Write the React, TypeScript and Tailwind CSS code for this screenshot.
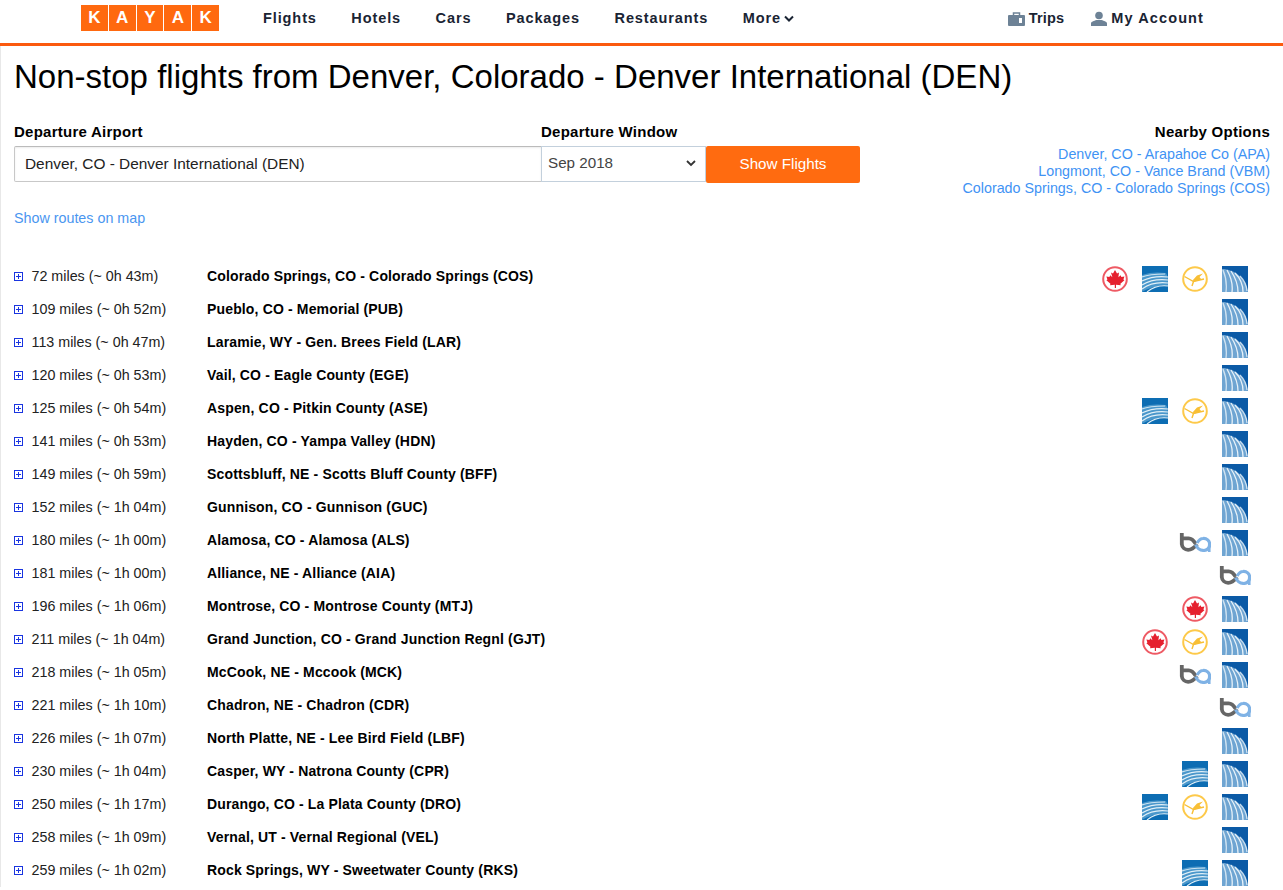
import React from "react";

type Logo = "ac" | "ca" | "lh" | "ua" | "bo";
type Route = { d: string; name: string; logos: Logo[] };

const routes: Route[] = [
  { d: "72 miles (~ 0h 43m)", name: "Colorado Springs, CO - Colorado Springs (COS)", logos: ["ac", "ca", "lh", "ua"] },
  { d: "109 miles (~ 0h 52m)", name: "Pueblo, CO - Memorial (PUB)", logos: ["ua"] },
  { d: "113 miles (~ 0h 47m)", name: "Laramie, WY - Gen. Brees Field (LAR)", logos: ["ua"] },
  { d: "120 miles (~ 0h 53m)", name: "Vail, CO - Eagle County (EGE)", logos: ["ua"] },
  { d: "125 miles (~ 0h 54m)", name: "Aspen, CO - Pitkin County (ASE)", logos: ["ca", "lh", "ua"] },
  { d: "141 miles (~ 0h 53m)", name: "Hayden, CO - Yampa Valley (HDN)", logos: ["ua"] },
  { d: "149 miles (~ 0h 59m)", name: "Scottsbluff, NE - Scotts Bluff County (BFF)", logos: ["ua"] },
  { d: "152 miles (~ 1h 04m)", name: "Gunnison, CO - Gunnison (GUC)", logos: ["ua"] },
  { d: "180 miles (~ 1h 00m)", name: "Alamosa, CO - Alamosa (ALS)", logos: ["bo", "ua"] },
  { d: "181 miles (~ 1h 00m)", name: "Alliance, NE - Alliance (AIA)", logos: ["bo"] },
  { d: "196 miles (~ 1h 06m)", name: "Montrose, CO - Montrose County (MTJ)", logos: ["ac", "ua"] },
  { d: "211 miles (~ 1h 04m)", name: "Grand Junction, CO - Grand Junction Regnl (GJT)", logos: ["ac", "lh", "ua"] },
  { d: "218 miles (~ 1h 05m)", name: "McCook, NE - Mccook (MCK)", logos: ["bo", "ua"] },
  { d: "221 miles (~ 1h 10m)", name: "Chadron, NE - Chadron (CDR)", logos: ["bo"] },
  { d: "226 miles (~ 1h 07m)", name: "North Platte, NE - Lee Bird Field (LBF)", logos: ["ua"] },
  { d: "230 miles (~ 1h 04m)", name: "Casper, WY - Natrona County (CPR)", logos: ["ca", "ua"] },
  { d: "250 miles (~ 1h 17m)", name: "Durango, CO - La Plata County (DRO)", logos: ["ca", "lh", "ua"] },
  { d: "258 miles (~ 1h 09m)", name: "Vernal, UT - Vernal Regional (VEL)", logos: ["ua"] },
  { d: "259 miles (~ 1h 02m)", name: "Rock Springs, WY - Sweetwater County (RKS)", logos: ["ca", "ua"] },
];

function LogoIcon({ kind }: { kind: Logo }) {
  if (kind === "ac")
    return (
      <svg width="26" height="26" viewBox="0 0 26 26">
        <circle cx="13" cy="13" r="11.800" fill="none" stroke="#ee5a64" strokeWidth="2" />
        <path
          d="M13 4l2 3.600 2-1-.6 4.600 2.200-2 .8 1.800 3-.6-1 3.200 1 .6-4 3.600.3 1.400-4.700-.5V22h-1.200v-3.300l-4.700.5.300-1.400-4-3.600 1-.6-1-3.200 3 .6.800-1.800 2.200 2L9 6.600l2 1z"
          fill="#e5202e"
        />
      </svg>
    );
  if (kind === "lh")
    return (
      <svg width="26" height="26" viewBox="0 0 26 26">
        <circle cx="13" cy="13" r="11.800" fill="#fff" stroke="#fdc94a" strokeWidth="2" />
        <path d="M2.500 10.500L11.500 15.500L22 13" fill="none" stroke="#f8bf35" strokeWidth="1.400" />
        <path d="M11.500 15.500L10 20" fill="none" stroke="#f8bf35" strokeWidth="1.400" />
        <path d="M10.500 14.500L15 9.500L21 7.500L17.500 11L19.500 13.500L13 15.500z" fill="#f8bf35" />
      </svg>
    );
  if (kind === "ua")
    return (
      <svg width="26" height="26" viewBox="0 0 26 26">
        <rect width="26" height="26" fill="#0b5aa6" />
        <path d="M0 3C12 3 24 12 26 26H0z" fill="#6fa5d2" />
        <g fill="none" stroke="#e8f2f9" strokeWidth="1.300">
          <path d="M1 4C4 11 5 18 4 26" opacity=".8" />
          <path d="M5 4C9 11 11 18 10 26" />
          <path d="M9 5C13 11 16 18 16 26" />
          <path d="M13 7C18 12 21 18 21 26" />
          <path d="M18 10C22 14 24.500 19 25 25" opacity=".8" />
        </g>
      </svg>
    );
  if (kind === "ca")
    return (
      <svg width="26" height="26" viewBox="0 0 26 26">
        <rect width="26" height="26" fill="#0d6db3" />
        <path d="M0 9C8 6 16 6 24 7C26 10 26 14 26 20C18 19 6 22 0 26z" fill="#4a97cb" />
        <g fill="none" stroke="#e2f0f7" strokeWidth="1.200">
          <path d="M0 11C7 8 15 8 23 8" opacity=".85" />
          <path d="M0 15C8 11 16 10 26 11" />
          <path d="M0 19C8 14 17 13 26 14" />
          <path d="M0 23C8 17 17 16 26 17" />
          <path d="M5 26C11 21 18 19 26 20" />
        </g>
      </svg>
    );
  return (
    <svg width="32" height="19" viewBox="0 0 30 18" className="shrink-0">
      <path d="M2.500 0V10.500A6 6 0 0 0 8.500 16C13 16 15 13 17 10.500" fill="none" stroke="#666" strokeWidth="3.600" />
      <path d="M2.500 5H9C12 5 14 7.500 15.500 10" fill="none" stroke="#666" strokeWidth="3.600" />
      <path d="M15.500 11C17 14 19.500 16.500 22.500 16.500A5.700 5.700 0 1 0 22.500 5.200C20 5.200 18.500 7 17 9.500" fill="none" stroke="#7fb2e5" strokeWidth="3" />
      <path d="M28.500 10V18" fill="none" stroke="#7fb2e5" strokeWidth="2.500" />
    </svg>
  );
}

function Row({ r }: { r: Route }) {
  return (
    <div className="grid h-[33px] grid-cols-[17.500px_175.500px_1fr_auto] items-center pl-[13px] pr-[35px]">
      <span className="relative flex h-[9px] w-[9px] items-center justify-center border border-[#1a35e0]">
        <span className="absolute h-[1px] w-[5px] bg-[#1a35e0]" />
        <span className="absolute h-[5px] w-[1px] bg-[#1a35e0]" />
      </span>
      <span className="text-[14.300px] leading-[17px] text-[#222]">{r.d}</span>
      <span className="text-[14px] font-bold leading-[17px] tracking-[0.15px] text-black">{r.name}</span>
      <div className="flex items-center justify-end gap-[14px] pt-[4px]">
        {r.logos.map((l, i) => (
          <div key={i} className="flex h-[26px] w-[26px] items-center justify-center">
            <LogoIcon kind={l} />
          </div>
        ))}
      </div>
    </div>
  );
}

const navItem = "text-[14.500px] font-bold tracking-[0.9px] text-[#1a2433]";
const label = "text-[15px] font-bold leading-[18px] tracking-[0.25px] text-black";
const link = "text-[14.300px] leading-[17px] text-[#3f93f4]";

export default function App() {
  return (
    <div className="h-[890px] overflow-hidden bg-white font-['Liberation_Sans',Arial,sans-serif]">
      <header className="flex h-[46px] items-start border-b-[3px] border-[#fb5a0f] pl-[81px] pr-[79px]">
        <div className="mt-[5px] flex h-[26px] w-[138px] gap-[1px]">
          {["K", "A", "Y", "A", "K"].map((c, i) => (
            <span key={i} className="flex h-[26px] flex-1 items-center justify-center bg-[#ff690f] text-[17px] font-bold text-white">
              {c}
            </span>
          ))}
        </div>
        <nav className="ml-[44px] flex h-[38px] items-center gap-[34.500px]">
          <span className={navItem}>Flights</span>
          <span className={navItem}>Hotels</span>
          <span className={navItem}>Cars</span>
          <span className={navItem}>Packages</span>
          <span className={navItem}>Restaurants</span>
          <span className={`${navItem} flex items-center gap-[3px]`}>
            More
            <svg width="10" height="8" viewBox="0 0 10 8">
              <path d="M1 1.500l4 4 4-4" fill="none" stroke="#1a2433" strokeWidth="2" />
            </svg>
          </span>
        </nav>
        <div className="ml-auto flex h-[36px] items-center gap-[27px]">
          <span className="mt-[2px] flex items-center gap-[4px] text-[14.500px] font-bold tracking-[0.2px] text-[#1a2433]">
            <svg width="17" height="14" viewBox="0 0 17 14">
              <path d="M5.500 3V1h6v2" fill="none" stroke="#6d8296" strokeWidth="1.500" />
              <rect x="0" y="3" width="17" height="11" rx="1" fill="#6d8296" />
              <rect x="11" y="6" width="3" height="5" fill="#fff" />
            </svg>
            Trips
          </span>
          <span className="mt-[1px] flex items-center gap-[4px] text-[14.500px] font-bold tracking-[1.100px] text-[#1a2433]">
            <svg width="16" height="15" viewBox="0 0 16 15">
              <circle cx="8" cy="4.500" r="3.800" fill="#6d8296" />
              <path d="M0 15v-2.500c0-2 3-2.500 5.500-3.500h5c2.500 1 5.500 1.500 5.500 3.500V15z" fill="#6d8296" />
            </svg>
            My Account
          </span>
        </div>
      </header>

      <main className="border-l-[1px] border-[#e8e8e8]">
        <h1 className="pl-[13px] pt-[12px] text-[33.030px] font-normal leading-[38px] text-black">
          Non-stop flights from Denver, Colorado - Denver International (DEN)
        </h1>

        <div className="mt-[27px] flex pl-[13px] pr-[13px]">
          <div className="flex flex-col">
            <div className="flex">
              <label className={`w-[527px] ${label}`}>Departure Airport</label>
              <label className={label}>Departure Window</label>
            </div>
            <div className="mt-[5px] flex items-start">
              <div className="flex h-[36px] w-[528px] items-center rounded-l-[2px] border border-[#c8c8c8] border-t-[#bbb] pl-[10px] text-[15.400px] text-[#222] shadow-[inset_0_1px_2px_rgba(0,0,0,0.08)]">
                Denver, CO - Denver International (DEN)
              </div>
              <div className="ml-[-1px] flex h-[36px] w-[165px] items-center justify-between border border-[#c3d0dc] pb-[1px] pl-[6px] pr-[9px] text-[15.200px] text-[#444]">
                Sep 2018
                <svg width="10" height="7" viewBox="0 0 10 7">
                  <path d="M1 1l4 4 4-4" fill="none" stroke="#333" strokeWidth="1.800" />
                </svg>
              </div>
              <button className="h-[37px] w-[154px] rounded-[2px] bg-[#ff6b10] text-[15.200px] text-white">Show Flights</button>
            </div>
          </div>
          <div className="ml-auto flex flex-col items-end text-right">
            <span className={label}>Nearby Options</span>
            <a className={`mt-[5px] ${link}`}>Denver, CO - Arapahoe Co (APA)</a>
            <a className={link}>Longmont, CO - Vance Brand (VBM)</a>
            <a className={link}>Colorado Springs, CO - Colorado Springs (COS)</a>
          </div>
        </div>

        <div className="mt-[13px] pl-[13px] text-[14.300px] leading-[17px] text-[#4a96f0]">Show routes on map</div>

        <div className="mt-[33px]">
          {routes.map((r) => (
            <Row key={r.name} r={r} />
          ))}
        </div>
      </main>
    </div>
  );
}
